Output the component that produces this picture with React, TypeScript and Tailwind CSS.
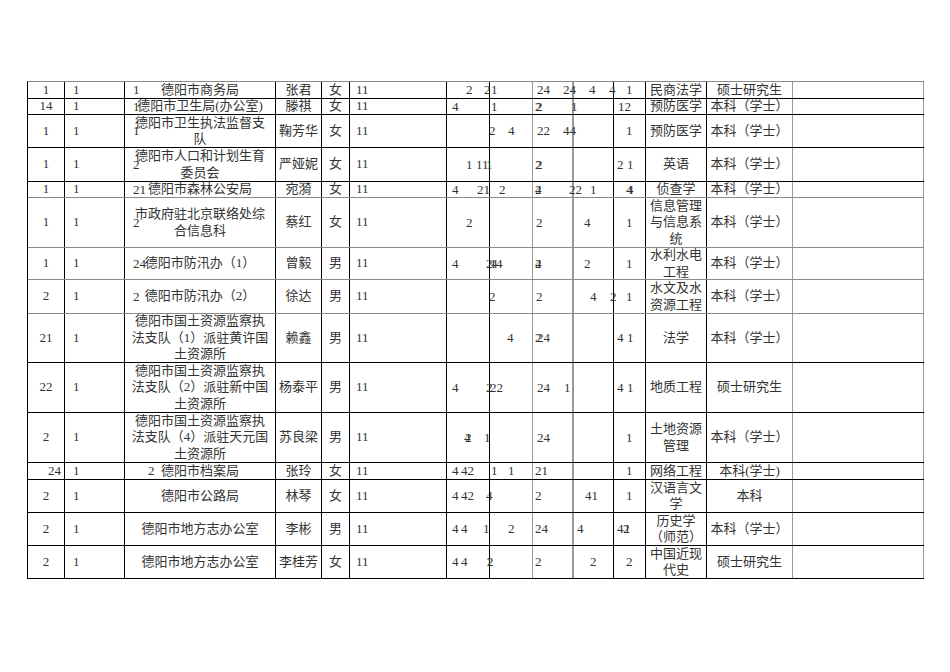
type Mark = [number, string]

type Row = {
  h: string
  line: string
  no: string
  noAlign?: string
  unit: string
  name: string
  sex: string
  major: string
  degree: string
  marks: Mark[]
}

const rows: Row[] = [
  { h: 'h-[17px]', line: 'border-black', no: '1', unit: '德阳市商务局', name: '张君', sex: '女', major: '民商法学', degree: '硕士研究生',
    marks: [[133, '1'], [466, '2'], [484, '2'], [491, '1'], [537, '24'], [563, '24'], [589, '4'], [609, '4'], [626, '1']] },
  { h: 'h-[16px]', line: 'border-black', no: '14', unit: '德阳市卫生局(办公室)', name: '滕祺', sex: '女', major: '预防医学', degree: '本科（学士）',
    marks: [[133, '1'], [452, '4'], [491, '1'], [535, '2'], [536, '2'], [571, '1'], [618, '12']] },
  { h: 'h-[33px]', line: 'border-black', no: '1', unit: '德阳市卫生执法监督支队', name: '鞠芳华', sex: '女', major: '预防医学', degree: '本科（学士）',
    marks: [[133, '1'], [489, '2'], [508, '4'], [537, '22'], [563, '44'], [626, '1']] },
  { h: 'h-[34px]', line: 'border-black', no: '1', unit: '德阳市人口和计划生育委员会', name: '严娅妮', sex: '女', major: '英语', degree: '本科（学士）',
    marks: [[133, '2'], [466, '1'], [476, '11'], [486, '1'], [535, '2'], [536, '2'], [617, '2'], [627, '1']] },
  { h: 'h-[16px]', line: 'border-[#8a8a8a]', no: '1', unit: '德阳市森林公安局', name: '宛漪', sex: '女', major: '侦查学', degree: '本科（学士）',
    marks: [[133, '21'], [452, '4'], [477, '21'], [499, '2'], [535, '4'], [535, '2'], [569, '22'], [590, '1'], [626, '4'], [627, '4']] },
  { h: 'h-[50px]', line: 'border-[#8a8a8a]', no: '1', unit: '市政府驻北京联络处综合信息科', name: '蔡红', sex: '女', major: '信息管理与信息系统', degree: '本科（学士）',
    marks: [[133, '2'], [466, '2'], [536, '2'], [584, '4'], [626, '1']] },
  { h: 'h-[32px]', line: 'border-[#8a8a8a]', no: '1', unit: '德阳市防汛办（1）', name: '曾毅', sex: '男', major: '水利水电工程', degree: '本科（学士）',
    marks: [[133, '24'], [452, '4'], [486, '2'], [490, '1'], [491, '4'], [496, '4'], [535, '4'], [535, '2'], [584, '2'], [626, '1']] },
  { h: 'h-[34px]', line: 'border-[#8a8a8a]', no: '2', unit: '德阳市防汛办（2）', name: '徐达', sex: '男', major: '水文及水资源工程', degree: '本科（学士）',
    marks: [[133, '2'], [489, '2'], [536, '2'], [590, '4'], [610, '2'], [626, '1']] },
  { h: 'h-[49px]', line: 'border-black', no: '21', unit: '德阳市国土资源监察执法支队（1）派驻黄许国土资源所', name: '赖鑫', sex: '男', major: '法学', degree: '本科（学士）',
    marks: [[507, '4'], [535, '2'], [537, '24'], [617, '4'], [627, '1']] },
  { h: 'h-[50px]', line: 'border-black', no: '22', unit: '德阳市国土资源监察执法支队（2）派驻新中国土资源所', name: '杨泰平', sex: '男', major: '地质工程', degree: '硕士研究生',
    marks: [[452, '4'], [486, '2'], [490, '22'], [537, '24'], [564, '1'], [617, '4'], [627, '1']] },
  { h: 'h-[50px]', line: 'border-black', no: '2', unit: '德阳市国土资源监察执法支队（4）派驻天元国土资源所', name: '苏良梁', sex: '男', major: '土地资源管理', degree: '本科（学士）',
    marks: [[464, '4'], [465, '2'], [484, '1'], [537, '24'], [626, '1']] },
  { h: 'h-[17px]', line: 'border-black', no: '24', noAlign: 'justify-end pr-[3px]', unit: '德阳市档案局', name: '张玲', sex: '女', major: '网络工程', degree: '本科(学士)',
    marks: [[148, '2'], [452, '4'], [461, '42'], [491, '1'], [508, '1'], [535, '21'], [626, '1']] },
  { h: 'h-[33px]', line: 'border-black', no: '2', unit: '德阳市公路局', name: '林琴', sex: '女', major: '汉语言文学', degree: '本科',
    marks: [[452, '4'], [461, '42'], [486, '4'], [535, '2'], [585, '41'], [626, '1']] },
  { h: 'h-[33px]', line: 'border-black', no: '2', unit: '德阳市地方志办公室', name: '李彬', sex: '男', major: '历史学（师范）', degree: '本科（学士）',
    marks: [[452, '4'], [461, '4'], [483, '1'], [508, '2'], [535, '24'], [577, '4'], [617, '4'], [623, '2'], [624, '1']] },
  { h: 'h-[33px]', line: 'border-black', no: '2', unit: '德阳市地方志办公室', name: '李桂芳', sex: '女', major: '中国近现代史', degree: '硕士研究生',
    marks: [[452, '4'], [461, '4'], [486, '1'], [487, '2'], [535, '2'], [590, '2'], [626, '2']] },
]

function TableRow({ row }: { row: Row }) {
  const cell = 'flex items-center border-r'
  return (
    <div className={`relative flex border-b ${row.h} ${row.line}`}>
      <div className={`${cell} w-[37px] border-black ${row.noAlign ?? 'justify-center'}`}>{row.no}</div>
      <div className={`${cell} w-[60px] border-black pl-[8px]`}>1</div>
      <div className={`${cell} w-[151px] border-black justify-center px-[6px] text-center`}>{row.unit}</div>
      <div className={`${cell} w-[46px] border-black justify-center`}>{row.name}</div>
      <div className={`${cell} w-[28px] border-black justify-center`}>{row.sex}</div>
      <div className={`${cell} w-[97px] border-black pl-[6px]`}>11</div>
      <div className={`${cell} w-[43px] border-black`} />
      <div className={`${cell} w-[43px] border-[#9a9a9a]`} />
      <div className={`${cell} w-[41px] border-r-2 border-[#9a9a9a]`} />
      <div className={`${cell} w-[40px] border-black`} />
      <div className={`${cell} w-[32px] border-black`} />
      <div className={`${cell} w-[61px] border-black justify-center px-[3px] text-center`}>{row.major}</div>
      <div className={`${cell} w-[86px] border-[#9a9a9a] justify-center text-center`}>{row.degree}</div>
      <div className={`${cell} w-[131px] border-[#9a9a9a]`} />

      {/* stray digits of the source sheet, overlapping the cells */}
      {row.marks.map(([x, t], i) => (
        <span
          key={i}
          className="absolute top-1/2 -translate-y-1/2 whitespace-pre"
          style={{ left: x - 28 }}
        >
          {t}
        </span>
      ))}
    </div>
  )
}

export default function App() {
  return (
    <div className="h-[672px] w-[950px] bg-white pt-[81px] pl-[27px] font-['Liberation_Serif','Noto_Sans_CJK_SC',serif] text-[13px] leading-[16.5px] text-[#333]">
      <div className="w-[897px] border-t border-l border-t-[#8a8a8a] border-l-black">
        {rows.map((row, i) => (
          <TableRow key={i} row={row} />
        ))}
      </div>
    </div>
  )
}
